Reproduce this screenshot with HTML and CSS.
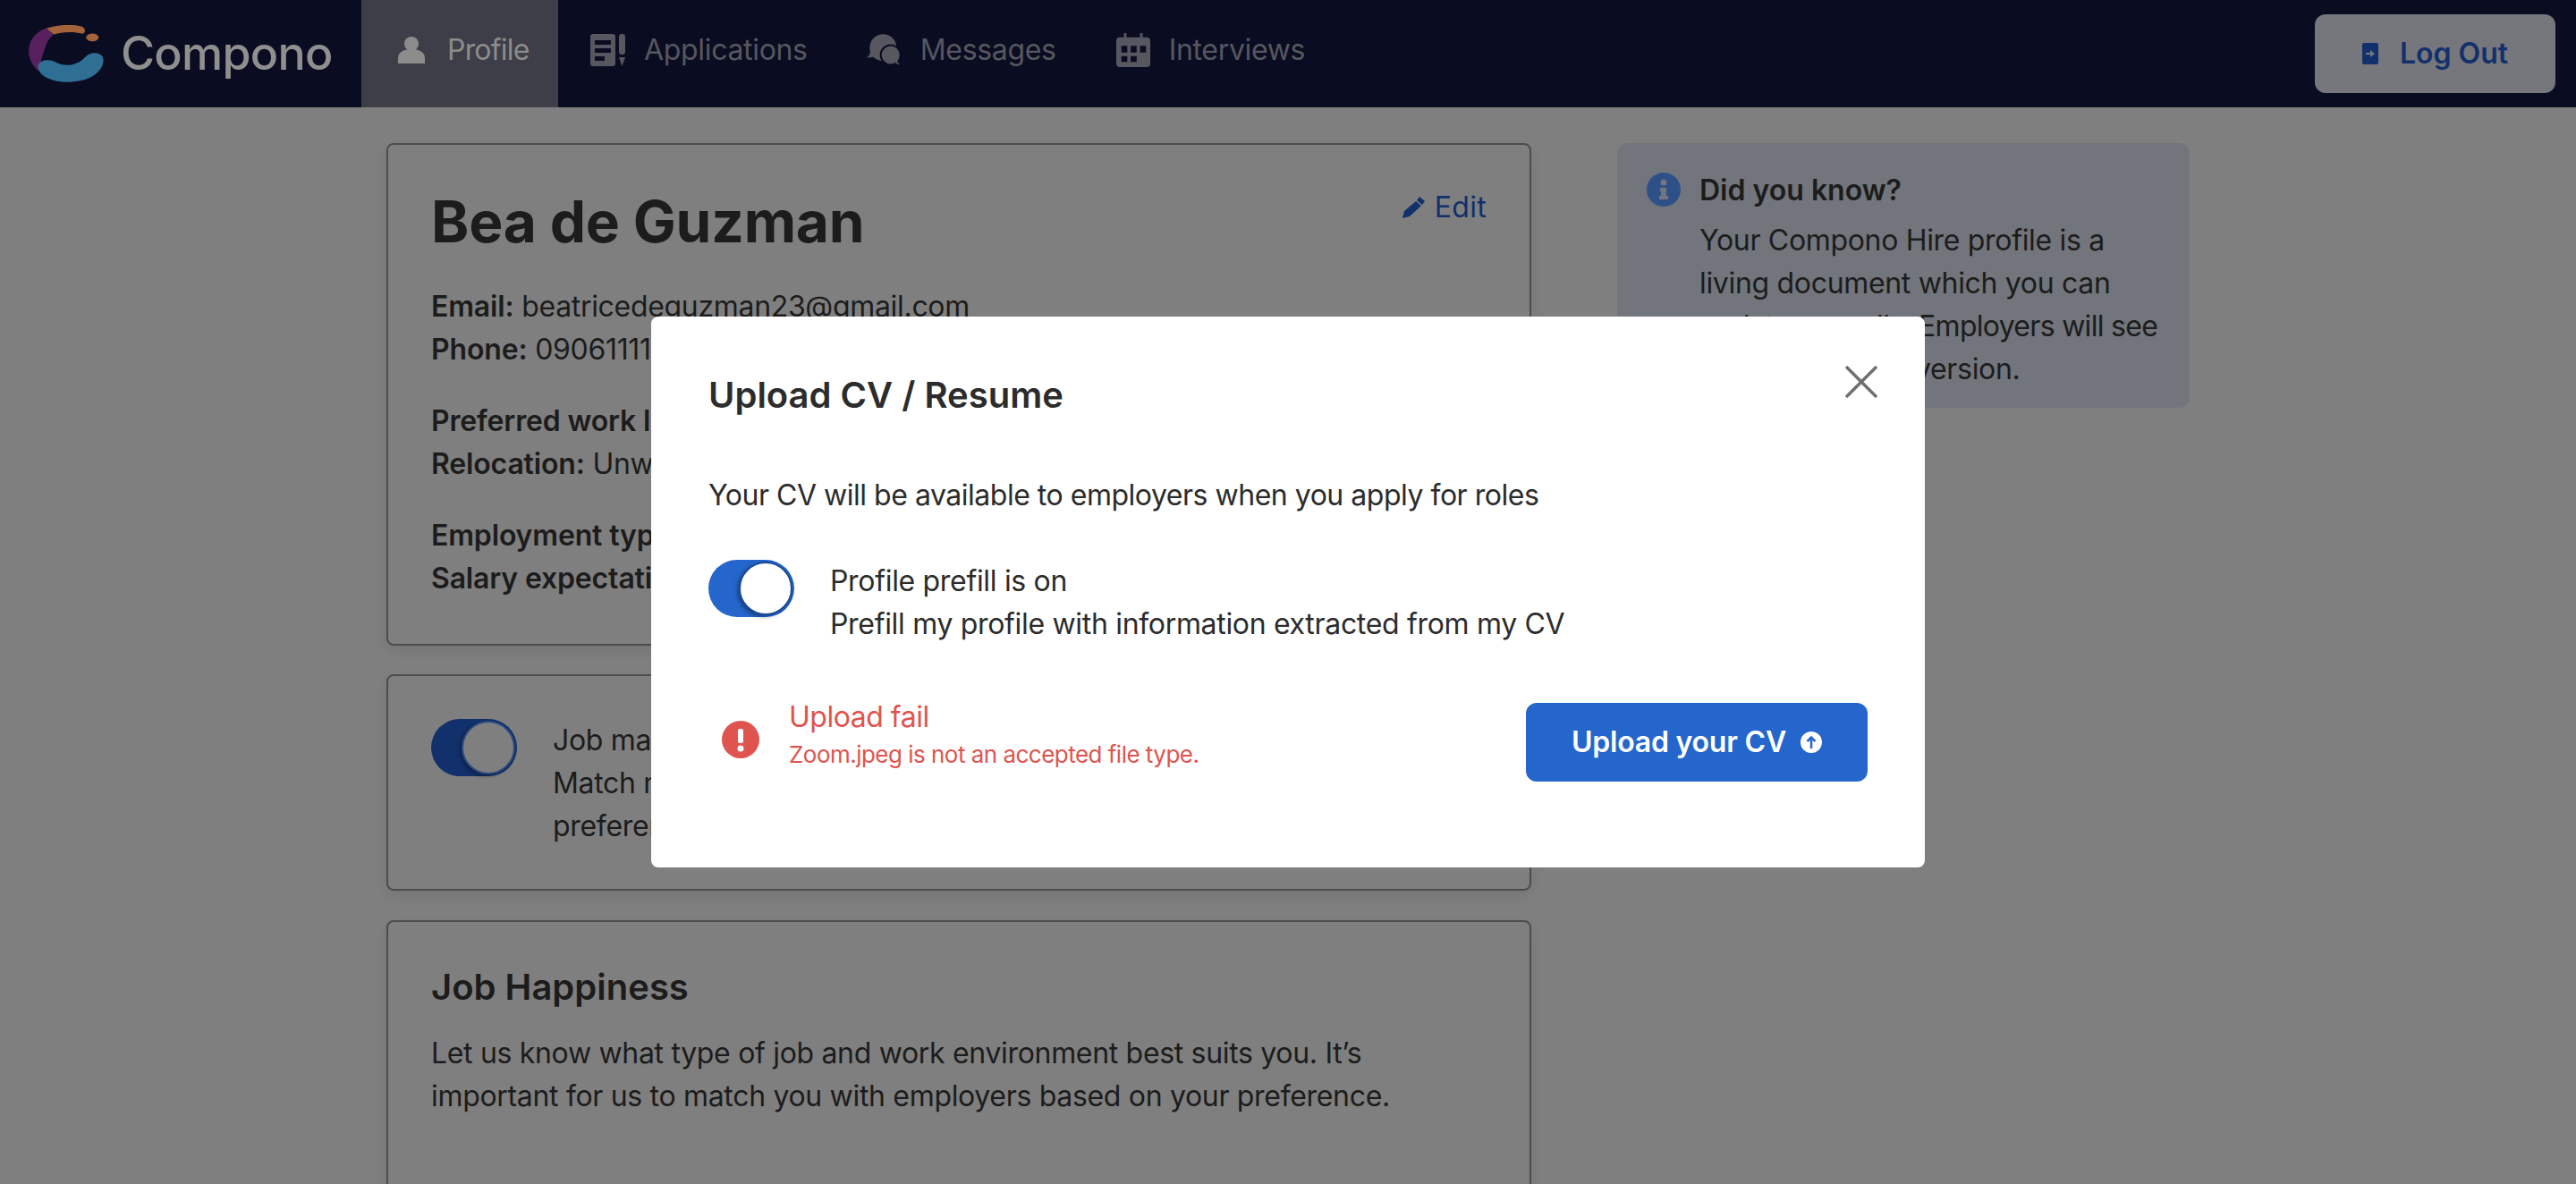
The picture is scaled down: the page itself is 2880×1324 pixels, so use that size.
FILE: index.html
```html
<!DOCTYPE html>
<html lang="en">
<head>
    <meta charset="UTF-8">
    <title>Compono - Profile</title>
    <link rel="stylesheet" href="styles.css">
</head>
<body>
<div class="nav">
    <a class="logo">
        <svg class="logo-mark" viewBox="36 37 252 191">
            <path fill="#a4623a" d="M95 48C130 35 190 32 215 42C228 48 228 62 216 66C190 58 150 58 120 68Z"/>
            <path fill="#57205f" d="M95 48L120 68C95 85 88 125 78 155L68 190C40 165 30 130 40 100C48 75 70 55 95 48Z"/>
            <path fill="#306f94" d="M68 172C72 155 100 150 120 158C150 175 190 178 220 150C235 130 265 122 282 140C295 160 280 190 250 208C215 230 140 235 100 215C80 205 65 190 68 172Z"/>
            <ellipse fill="#a4623a" cx="250" cy="78" rx="21" ry="13"/>
        </svg>
        <span class="logo-text">Compono</span>
    </a>
    <a class="nav-tab active">
        <svg class="icon-person" viewBox="0 0 30 30"><circle cx="15" cy="8" r="8"/><path d="M0 30V24C0 17 7 14 15 14S30 17 30 24V30Z"/></svg>
        <span>Profile</span>
    </a>
    <div class="nav-list">
        <a class="nav-tab">
            <svg class="icon-nav" viewBox="0 0 40 36"><path fill-rule="evenodd" d="M3 0H25A3 3 0 0 1 28 3V33A3 3 0 0 1 25 36H3A3 3 0 0 1 0 33V3A3 3 0 0 1 3 0ZM5 7V12H23V7ZM5 16V21H23V16ZM5 25V30H16V25Z"/><rect x="32" y="0" width="7" height="23" rx="3"/><path d="M32 26H39L35.500 36Z"/></svg>
            <span>Applications</span>
        </a>
        <a class="nav-tab">
            <svg class="icon-nav" viewBox="70 55 120 107"><path d="M125 55C150 55 170 75 170 100C170 125 150 145 125 145C112 145 100 140 92 132L70 135C78 128 82 120 82 112C80 108 80 104 80 100C80 75 100 55 125 55Z"/><path stroke="#0a0c22" stroke-width="6" d="M150 92C170 92 183 107 183 125C183 135 180 142 176 147C180 152 185 156 190 160C180 161 170 158 165 154C160 157 155 158 150 158C132 158 117 143 117 125C117 107 132 92 150 92Z"/></svg>
            <span>Messages</span>
        </a>
        <a class="nav-tab">
            <svg class="icon-nav" viewBox="0 0 40 40"><path fill-rule="evenodd" d="M9 0H12V5H28V0H31V5H36A4 4 0 0 1 40 9V36A4 4 0 0 1 36 40H4A4 4 0 0 1 0 36V9A4 4 0 0 1 4 5H9ZM6 15V23H13V15ZM17 15V23H24V15ZM28 15V23H35V15ZM6 27V34H13V27ZM17 27V34H24V27Z"/></svg>
            <span>Interviews</span>
        </a>
    </div>
    <a class="logout">
        <svg class="icon-logout" viewBox="0 0 18 24"><path fill-rule="evenodd" d="M2 0H16A2 2 0 0 1 18 2V22A2 2 0 0 1 16 24H2A2 2 0 0 1 0 22V2A2 2 0 0 1 2 0ZM4 11V13H9V16L14 12L9 8V11Z"/></svg>
        <span>Log Out</span>
    </a>
</div>

<div class="page">
    <div class="col-main">
        <div class="card card-info">
            <div class="card-head">
                <h1>Bea de Guzman</h1>
                <a class="edit">
                    <svg class="icon-edit" viewBox="0 0 25 24"><path d="M19 0L25 5L22 9L16 4ZM15 5L21 10L8 22L0 24L2 16Z"/></svg>
                    <span>Edit</span>
                </a>
            </div>
            <div class="group first">
                <p><b>Email:</b> beatricedeguzman23@gmail.com</p>
                <p><b>Phone:</b> 09061111111</p>
            </div>
            <div class="group">
                <p><b>Preferred work loc:</b></p>
                <p><b>Relocation:</b> Unwilling</p>
            </div>
            <div class="group">
                <p><b>Employment type:</b> Full</p>
                <p><b>Salary expectation:</b></p>
            </div>
        </div>
        <div class="card card-match">
            <div class="toggle toggle-dim"><i></i></div>
            <div class="match-text">
                <p>Job match is on</p>
                <p>Match me with jobs</p>
                <p>preferences</p>
            </div>
        </div>
        <div class="card card-happy">
            <h2>Job Happiness</h2>
            <p>Let us know what type of job and work environment best suits you. It’s</p>
            <p>important for us to match you with employers based on your preference.</p>
        </div>
    </div>
    <div class="col-side">
        <div class="tip">
            <svg class="icon-info" viewBox="0 0 38 38"><circle cx="19" cy="19" r="19" fill="#2e5088"/><circle cx="19" cy="11" r="3.500" fill="#72757b"/><path fill="#72757b" d="M15 17H22V26H24V30H14V26H16V21H15Z"/></svg>
            <div class="tip-body">
                <h3>Did you know?</h3>
                <p>Your Compono Hire profile is a</p>
                <p>living document which you can</p>
                <p class="tight">update annually. Employers will see</p>
                <p>the most recent version.</p>
            </div>
        </div>
    </div>
</div>

<div class="overlay">
    <div class="modal">
        <svg class="close" viewBox="0 0 36 36"><path d="M1 1L35 35M35 1L1 35"/></svg>
        <h2>Upload CV / Resume</h2>
        <p class="modal-intro">Your CV will be available to employers when you apply for roles</p>
        <div class="prefill">
            <div class="toggle"><i></i></div>
            <div>
                <p>Profile prefill is on</p>
                <p>Prefill my profile with information extracted from my CV</p>
            </div>
        </div>
        <div class="upload-row">
            <div class="error">
                <svg class="icon-error" viewBox="0 0 42 42"><circle cx="21" cy="21" r="21" fill="#e0544f"/><rect x="18" y="9" width="6" height="16" rx="2" fill="#fff"/><circle cx="21" cy="31" r="3.500" fill="#fff"/></svg>
                <div>
                    <div class="error-title">Upload fail</div>
                    <div class="error-msg">Zoom.jpeg is not an accepted file type.</div>
                </div>
            </div>
            <a class="btn-upload">
                <span>Upload your CV</span>
                <svg class="icon-up" viewBox="0 0 24 24"><circle cx="12" cy="12" r="12" fill="#fff"/><path fill="none" stroke="#2566cc" stroke-width="2.500" d="M12 19V7M7.500 11L12 6.500L16.500 11"/></svg>
            </a>
        </div>
    </div>
</div>
</body>
</html>
```

FILE: styles.css
```css
*{
    margin: 0;
    padding: 0;
    box-sizing: border-box;
}
body{
    height: 100vh;
    overflow: hidden;
    background: #7f7f7f;
    color: #1c1c1c;
    font-family: "Inter", "Noto Sans", sans-serif;
    font-size: 32px;
    line-height: 48px;
    letter-spacing: -0.01em;
}
b{
    font-weight: 600;
    letter-spacing: -0.005em;
}

/* nav */
.nav{
    display: flex;
    height: 120px;
    background: #0a0c22;
}
.logo{
    display: flex;
    align-items: center;
    gap: 19px;
    width: 404px;
    padding-left: 32px;
}
.logo-mark{
    width: 84px;
    height: 64px;
}
.logo-text{
    color: #8f8f8f;
    font-size: 52px;
    font-weight: 500;
    letter-spacing: -0.015em;
}
.nav-tab{
    display: flex;
    align-items: center;
    gap: 20px;
    padding-bottom: 8px;
    color: #56575f;
    fill: #56575f;
}
.nav-tab.active{
    width: 220px;
    padding-left: 41px;
    gap: 25px;
    background: #3d3e48;
    color: #8c8c8c;
    fill: #8c8c8c;
    letter-spacing: -0.025em;
}
.nav-list{
    display: flex;
    gap: 66px;
    padding-left: 36px;
}
.icon-person{
    width: 30px;
    height: 30px;
}
.icon-nav{
    width: 40px;
    height: 38px;
}
.logout{
    display: flex;
    align-items: center;
    justify-content: center;
    gap: 24px;
    width: 269px;
    height: 88px;
    margin: 16px 23px 0 auto;
    background: #76777c;
    border-radius: 12px;
    color: #12306b;
    fill: #12306b;
    font-weight: 600;
    letter-spacing: 0;
}
.icon-logout{
    width: 18px;
    height: 24px;
}

/* page */
.page{
    display: grid;
    grid-template-columns: 1280px 640px;
    gap: 96px;
    width: 2016px;
    margin: 40px auto 0;
}
.card{
    border: 2px solid #4d4d4d;
    border-radius: 8px;
    box-shadow: 0 6px 14px rgba(0,0,0,.08);
    padding: 46px 48px;
    margin-bottom: 32px;
}
.card-info{
    height: 562px;
}
.card-head{
    display: flex;
    justify-content: space-between;
    align-items: flex-start;
}
h1{
    font-size: 64px;
    line-height: 80px;
    font-weight: 700;
    letter-spacing: -0.003em;
}
.edit{
    display: flex;
    align-items: center;
    gap: 11px;
    color: #12306b;
    fill: #12306b;
    letter-spacing: 0.01em;
}
.icon-edit{
    width: 25px;
    height: 24px;
}
.group{
    margin-top: 32px;
    white-space: nowrap;
}
.group.first{
    margin-top: 31px;
}
.card-match{
    display: flex;
    gap: 40px;
    padding-top: 48px;
    margin-bottom: 33px;
}
.match-text{
    white-space: nowrap;
}
.card-happy{
    min-height: 600px;
    padding-top: 43px;
}
.card-happy h2{
    font-size: 40px;
    line-height: 60px;
    font-weight: 600;
    margin-bottom: 20px;
    letter-spacing: 0;
}
.tip{
    display: flex;
    gap: 21px;
    height: 296px;
    padding: 33px;
    background: #72757b;
    border-radius: 12px;
    white-space: nowrap;
}
.icon-info{
    width: 38px;
    height: 38px;
    flex: none;
}
.tip-body{
    margin-top: -4px;
}
.tip-body h3{
    font-size: 32px;
    font-weight: 600;
    letter-spacing: 0;
    margin-bottom: 8px;
}
.tip-body .tight{
    letter-spacing: -0.022em;
}

/* toggle */
.toggle{
    display: flex;
    justify-content: flex-end;
    flex: none;
    width: 96px;
    height: 64px;
    padding: 2px;
    background: #2566cc;
    border-radius: 32px;
}
.toggle i{
    width: 60px;
    height: 60px;
    background: #fff;
    border: 2px solid #1a4a96;
    border-radius: 50%;
    box-shadow: -2px 2px 4px rgba(0,0,0,.35);
}
.toggle-dim{
    background: #12306b;
}
.toggle-dim i{
    background: #7f7f7f;
    border-color: #2c4a80;
}

/* modal */
.overlay{
    position: fixed;
    left: 0;
    top: 0;
    width: 100%;
    height: 100%;
    display: flex;
    align-items: center;
    justify-content: center;
}
.modal{
    position: relative;
    width: 1424px;
    height: 616px;
    padding: 60px 64px 0;
    background: #fff;
    border-radius: 8px;
    color: #2c2c2c;
}
.modal h2{
    font-size: 40px;
    line-height: 56px;
    font-weight: 600;
    letter-spacing: 0;
}
.modal-intro{
    margin-top: 60px;
    letter-spacing: -0.015em;
}
.close{
    position: absolute;
    right: 53px;
    top: 55px;
    width: 36px;
    height: 36px;
    fill: none;
    stroke: #707070;
    stroke-width: 3.500;
}
.prefill{
    display: flex;
    gap: 40px;
    margin-top: 48px;
}
.upload-row{
    display: flex;
    justify-content: space-between;
    margin-top: 56px;
}
.error{
    display: flex;
    gap: 33px;
    padding-left: 15px;
    color: #e0544f;
}
.icon-error{
    width: 42px;
    height: 42px;
    margin-top: 28px;
}
.error-title{
    line-height: 48px;
    letter-spacing: -0.015em;
}
.error-msg{
    font-size: 26px;
    line-height: 36px;
    letter-spacing: -0.02em;
}
.btn-upload{
    display: flex;
    align-items: center;
    justify-content: center;
    gap: 16px;
    width: 382px;
    height: 88px;
    margin-top: 8px;
    background: #2566cc;
    border-radius: 12px;
    color: #fff;
    font-weight: 600;
    letter-spacing: -0.007em;
}
.icon-up{
    width: 24px;
    height: 24px;
}
```
